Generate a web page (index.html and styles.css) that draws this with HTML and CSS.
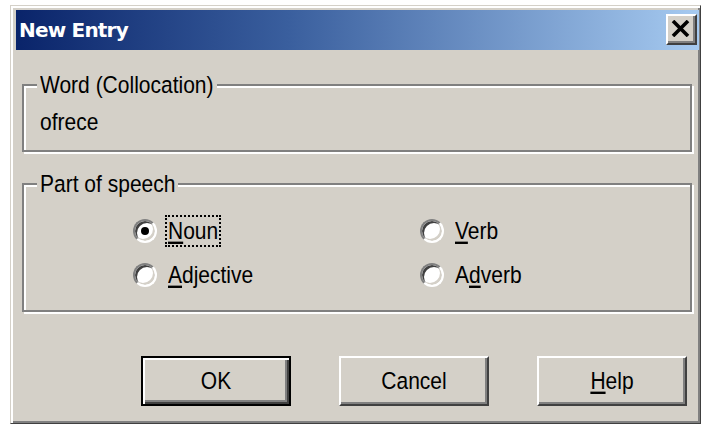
FILE: index.html
```html
<!DOCTYPE html>
<html lang="en">
<head>
<meta charset="utf-8">
<title>New Entry</title>
<link rel="stylesheet" href="styles.css">
</head>
<body>
<div class="window">
  <div class="titlebar">
    <span class="title">New Entry</span>
    <div class="close-btn">
      <svg width="19" height="17" viewBox="0 0 19 17">
        <path d="M2 1 L17 16 M17 1 L2 16" stroke="#000" stroke-width="3.6" fill="none"/>
      </svg>
    </div>
  </div>
  <div class="content">
    <div class="group group-word">
      <span class="group-label"><span class="t">Word (Collocation)</span></span>
      <div class="word-value"><span class="t">ofrece</span></div>
    </div>
    <div class="group group-pos">
      <span class="group-label"><span class="t">Part of speech</span></span>
      <div class="radio-grid">
        <label class="radio">
          <span class="radio-circle checked"></span>
          <span class="radio-text focused"><span class="t"><u>N</u>oun</span></span>
        </label>
        <label class="radio">
          <span class="radio-circle"></span>
          <span class="radio-text"><span class="t"><u>V</u>erb</span></span>
        </label>
        <label class="radio">
          <span class="radio-circle"></span>
          <span class="radio-text"><span class="t"><u>A</u>djective</span></span>
        </label>
        <label class="radio">
          <span class="radio-circle"></span>
          <span class="radio-text"><span class="t">A<u>d</u>verb</span></span>
        </label>
      </div>
    </div>
    <div class="button-row">
      <div class="btn btn-default"><span class="t">OK</span></div>
      <div class="btn"><span class="t">Cancel</span></div>
      <div class="btn"><span class="t"><u>H</u>elp</span></div>
    </div>
  </div>
</div>
</body>
</html>
```

FILE: styles.css
```css
html, body {
  margin: 0;
  padding: 0;
  background: #ffffff;
}

body {
  font-family: "Liberation Sans", Arial, sans-serif;
  font-size: 21px;
  color: #000;
  overflow: hidden;
}

/* dialog text is drawn taller than it is wide */
.t {
  display: inline-block;
  transform: scaleY(1.18);
}

.window {
  box-sizing: border-box;
  margin: 5px 0 0 10px;
  width: 691px;
  height: 419px;
  background: #d4d0c8;
  border: 1px solid;
  border-color: #d4d0c8 #404040 #404040 #d4d0c8;
  box-shadow: inset 2px 2px 0 #ffffff, inset -2px -2px 0 #808080;
  padding: 4px 0 0 5px;
}

.titlebar {
  height: 40px;
  width: 683px;
  background: linear-gradient(to right, #0a246a 0%, #3a5f9e 40%, #a6caf0 100%);
  display: flex;
  align-items: center;
  justify-content: space-between;
  padding: 0 2px 0 3px;
  box-sizing: border-box;
}

.title {
  font-family: "DejaVu Sans", Verdana, sans-serif;
  font-weight: bold;
  font-size: 20px;
  letter-spacing: -0.8px;
  color: #ffffff;
}

.close-btn {
  box-sizing: border-box;
  width: 31px;
  height: 31px;
  margin-top: -1px;
  background: #d4d0c8;
  border: 2px solid;
  border-color: #ffffff #404040 #404040 #ffffff;
  box-shadow: inset -2px -2px 0 #808080;
  display: flex;
  align-items: center;
  justify-content: center;
  padding: 0 2px 2px 0;
}

.close-btn svg {
  display: block;
}

.content {
  padding: 0 0 0 6px;
}

.group {
  position: relative;
  box-sizing: border-box;
  width: 670px;
  border: 2px solid #808080;
  box-shadow: inset 2px 2px 0 #ffffff, 2px 2px 0 #ffffff;
}

.group-label {
  position: absolute;
  top: -13px;
  left: 13px;
  padding: 0 3px;
  background: #d4d0c8;
  line-height: 24px;
}

.group-word {
  margin-top: 34px;
  height: 68px;
  padding: 24px 0 0 16px;
}

.word-value {
  line-height: 24px;
}

.group-pos {
  margin-top: 31px;
  height: 129px;
  padding: 31px 0 0 109px;
}

.radio-grid {
  display: grid;
  grid-template-columns: 287px 200px;
  row-gap: 14px;
}

.radio {
  display: flex;
  align-items: center;
  height: 30px;
}

.radio-circle {
  position: relative;
  box-sizing: border-box;
  width: 24px;
  height: 24px;
  border-radius: 50%;
  background: #ffffff;
  border: 2px solid;
  border-color: #808080 #ffffff #ffffff #808080;
  box-shadow: inset 2px 2px 0 #404040, inset -2px -2px 0 #d4d0c8;
  flex: none;
}

.radio-circle.checked::after {
  content: "";
  position: absolute;
  left: 6px;
  top: 6px;
  width: 8px;
  height: 8px;
  border-radius: 50%;
  background: #000;
}

.radio-text {
  margin-left: 8px;
  padding: 1px 1px;
  border: 2px dotted transparent;
  line-height: 26px;
}

.radio-text.focused {
  border-color: #000;
}

.button-row {
  display: flex;
  justify-content: flex-end;
  gap: 48px;
  width: 670px;
  padding-right: 5px;
  box-sizing: border-box;
  margin-top: 44px;
}

.btn {
  box-sizing: border-box;
  width: 150px;
  height: 50px;
  display: flex;
  align-items: center;
  justify-content: center;
  background: #d4d0c8;
  border: 2px solid;
  border-color: #ffffff #404040 #404040 #ffffff;
  box-shadow: inset -2px -2px 0 #808080;
}

.btn-default {
  border-color: #000;
  box-shadow: inset 2px 2px 0 #ffffff, inset -2px -2px 0 #404040, inset -4px -4px 0 #808080;
}
```
